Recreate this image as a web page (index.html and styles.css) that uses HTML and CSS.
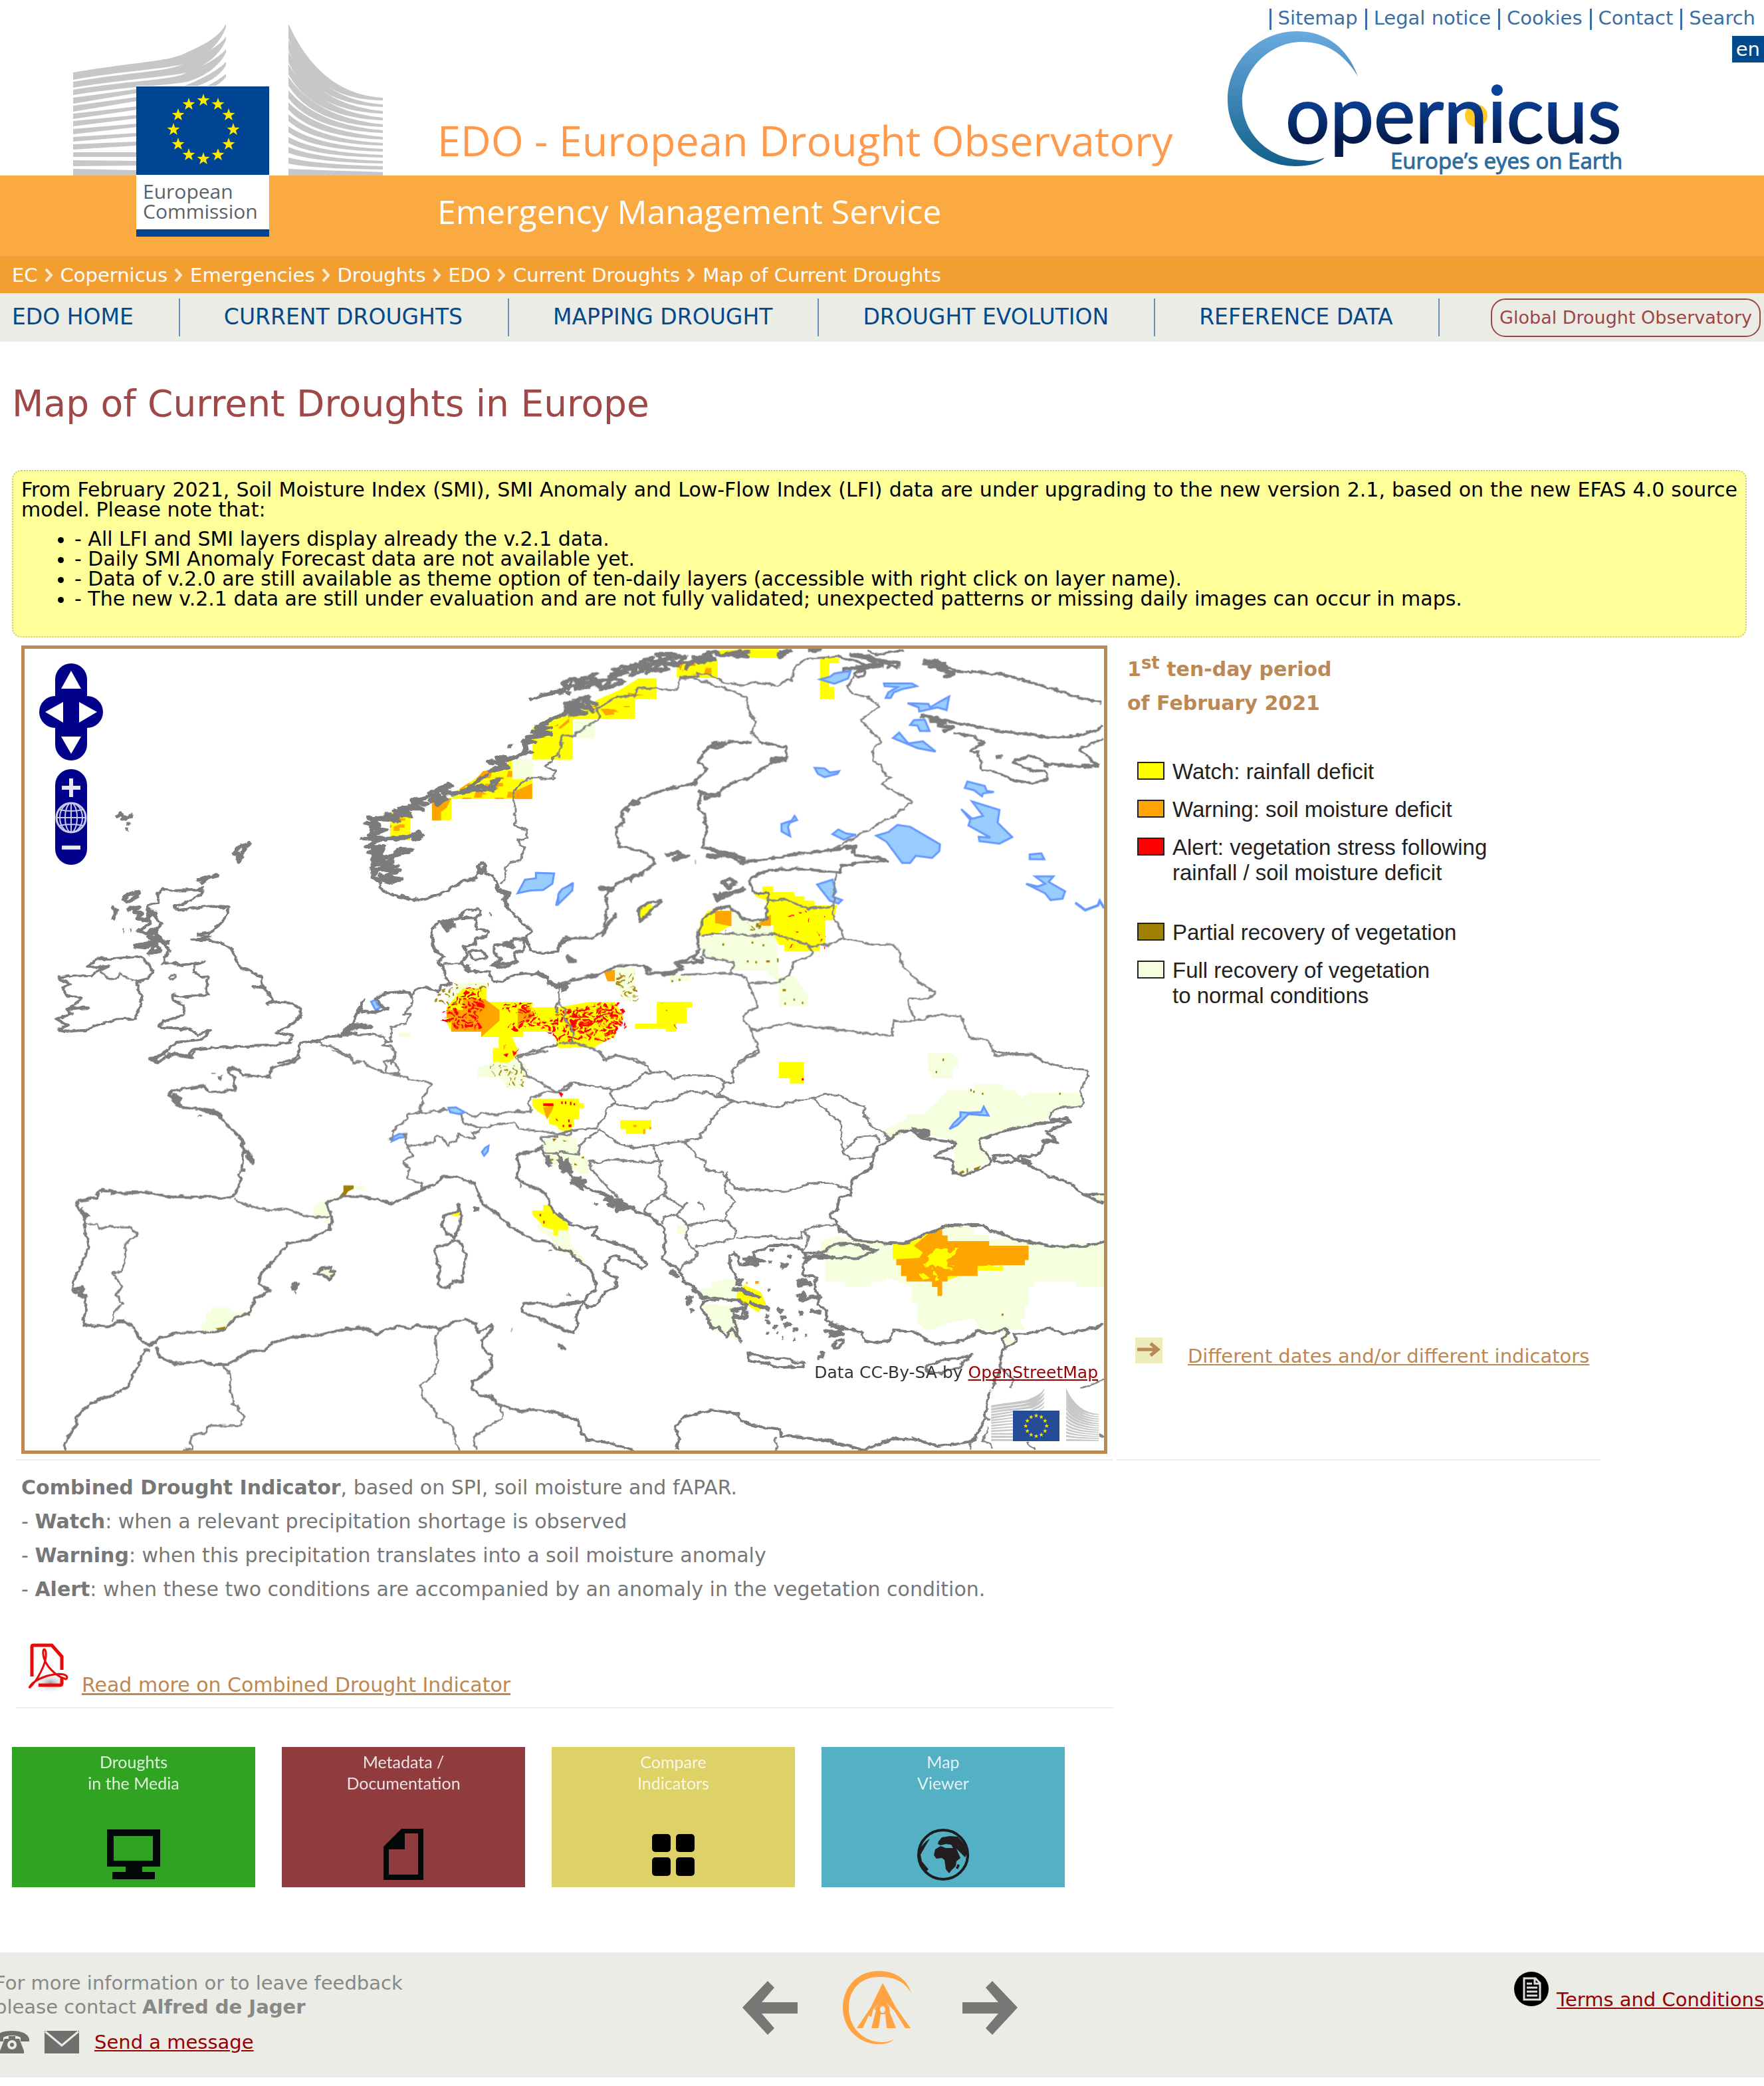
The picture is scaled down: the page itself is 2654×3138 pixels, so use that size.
FILE: index.html
```html
<!DOCTYPE html>
<html lang="en">
<head>
<meta charset="utf-8">
<title>Map of Current Droughts in Europe - EDO</title>
<meta name="viewport" content="width=device-width, initial-scale=1">
<link rel="stylesheet" href="styles.css">
</head>
<body>
<svg class="defs" width="0" height="0" aria-hidden="true">
  <defs>
    <filter id="rough" x="-2%" y="-2%" width="104%" height="104%">
      <feTurbulence type="fractalNoise" baseFrequency=".045" numOctaves="3" seed="4"/>
      <feDisplacementMap in="SourceGraphic" scale="16" xChannelSelector="R" yChannelSelector="G"/>
    </filter>
    <filter id="scatter" x="-5%" y="-5%" width="110%" height="110%">
      <feTurbulence type="fractalNoise" baseFrequency=".035" numOctaves="2" seed="9"/>
      <feDisplacementMap in="SourceGraphic" scale="45" xChannelSelector="R" yChannelSelector="G"/>
    </filter>
    <polygon id="star" points="0,-10 2.3,-3.2 9.5,-3.1 3.8,1.2 5.9,8.1 0,4 -5.9,8.1 -3.8,1.2 -9.5,-3.1 -2.3,-3.2"/>
    <g id="stars" fill="#fde800">
      <use href="#star" x="0" y="-44"/><use href="#star" x="22" y="-38"/><use href="#star" x="38" y="-22"/>
      <use href="#star" x="45" y="0"/><use href="#star" x="38" y="22"/><use href="#star" x="22" y="38"/>
      <use href="#star" x="0" y="44"/><use href="#star" x="-22" y="38"/><use href="#star" x="-38" y="22"/>
      <use href="#star" x="-45" y="0"/><use href="#star" x="-38" y="-22"/><use href="#star" x="-22" y="-38"/>
    </g>
    <g id="building" fill="#c6c7c9">
      <path d="M110 109C190 95 245 93 272 83C305 68 328 58 340 36V41C330 68 308 86 282 95C250 104 190 106 110 120Z"/>
      <path d="M110 123C190 109 245 108 272 98C305 83 330 70 340 55V60C330 84 308 100 282 109C250 116 190 119 110 132Z"/>
      <path d="M110 135C190 122 245 121 272 113C305 100 328 88 340 74V79C330 100 308 115 282 123C250 129 190 130 110 143Z"/>
      <path d="M278 129C308 117 330 104 340 93V98C330 116 310 126 290 131Z"/>
      <path d="M310 130C322 124 332 118 340 111V116C332 125 325 129 320 131Z"/>
      <path d="M110 147L206 134V140L110 156Z"/><path d="M110 159L206 146V152L110 168Z"/>
      <path d="M110 171L206 160V165L110 179Z"/><path d="M110 182L206 173V178L110 190Z"/>
      <path d="M110 194L206 186V191L110 202Z"/><path d="M110 206L206 200V205L110 213Z"/>
      <path d="M110 217L206 213V219L110 225Z"/><path d="M110 229H206V236H110Z"/>
      <path d="M110 241L206 242V249L110 250Z"/><path d="M110 254L206 256V264H110Z"/>
      <path d="M434 36Q482 142 576 147V151Q470 150 434 58Z"/>
      <path d="M434 60Q480 151 576 157V161Q470 158 434 76Z"/>
      <path d="M434 78Q478 159 576 167V171Q470 168 434 94Z"/>
      <path d="M434 97Q478 168 576 177V181Q470 177 434 112Z"/>
      <path d="M434 116Q478 178 576 187V191Q470 187 434 129Z"/>
      <path d="M434 136Q478 188 576 196V200Q470 196 434 148Z"/>
      <path d="M434 154Q478 198 576 206V210Q470 206 434 165Z"/>
      <path d="M434 172Q478 210 576 215V219Q470 216 434 182Z"/>
      <path d="M434 190Q478 220 576 224V228Q470 226 434 199Z"/>
      <path d="M434 206Q478 230 576 233V237Q470 235 434 215Z"/>
      <path d="M434 221Q478 239 576 242V246Q470 244 434 230Z"/>
      <path d="M434 237Q478 248 576 250V255Q470 254 434 246Z"/>
      <path d="M434 254Q478 256 576 259V264H434Z"/>
    </g>
    <linearGradient id="swoosh" x1="0" y1="0" x2="0" y2="1"><stop offset="0" stop-color="#6aaade"/><stop offset="1" stop-color="#11608b"/></linearGradient>
    <linearGradient id="letters" x1="0" y1="0" x2="0" y2="1"><stop offset=".35" stop-color="#0b429a"/><stop offset=".8" stop-color="#041a4a"/></linearGradient>
    <radialGradient id="shade"><stop offset="0" stop-color="#999"/><stop offset="1" stop-color="#fff" stop-opacity="0"/></radialGradient>
    <pattern id="red" width="72" height="80" patternUnits="userSpaceOnUse">
      <path fill="#f00" d="M0 0h15v10h-15zM22 5h7v20h-7zM36 0h14v8h-14zM58 8h14v9h-14zM8 18h7v20h-7zM29 30h20v9h-20zM50 22h7v18h-7zM64 26h8v14h-8zM0 46h14v9h-14zM22 42h7v16h-7zM36 48h8v20h-8zM50 46h15v8h-15zM8 62h20v9h-20zM57 60h8v18h-8zM43 70h7v10h-7zM0 72h7v8h-7z"/>
    </pattern>
    <pattern id="sparse" width="97" height="113" patternUnits="userSpaceOnUse">
      <path fill="#f00" d="M12 14h4v8h-4zM50 5h4v8h-4zM70 60h4v9h-4zM30 72h4v9h-4zM46 88h5v8h-5zM84 98h4v8h-4z"/>
    </pattern>
    <pattern id="flecks" width="62" height="70" patternUnits="userSpaceOnUse">
      <path fill="#a08000" d="M4 4h5v14h-5zM16 0h8v8h-8zM30 10h5v10h-5zM46 5h5v20h-5zM12 26h12v8h-12zM36 30h5v14h-5zM54 34h5v9h-5zM4 44h5v14h-5zM22 50h10v7h-10zM46 52h5v13h-5z"/>
    </pattern>
    <pattern id="mottle" width="90" height="76" patternUnits="userSpaceOnUse">
      <path fill="#ffa500" d="M0 10l18-8h12v12h-14v12h-16zM44 34h20l12 10h-14v12h-22zM70 4h14v10h-14zM8 56h24v8h-24z"/>
    </pattern>
  </defs>
</svg>

<header class="site-header">
  <svg class="ec-logo" viewBox="110 36 466 320" role="img" aria-label="European Commission">
    <use href="#building"/>
    <rect x="205" y="129" width="200" height="227" fill="#fff"/>
    <rect x="205" y="130" width="200" height="133" fill="#004494"/>
    <rect x="205" y="345" width="200" height="11" fill="#004494"/>
    <use href="#stars" x="306" y="195"/>
    <text class="ec-name" x="215" y="299">European</text>
    <text class="ec-name" x="215" y="329">Commission</text>
  </svg>
  <div class="titles">
    <p class="site-title">EDO - European Drought Observatory</p>
    <p class="site-subtitle">Emergency Management Service</p>
  </div>
  <div class="header-side">
    <nav class="tools" aria-label="Site tools">
      <a href="#">Sitemap</a><a href="#">Legal notice</a><a href="#">Cookies</a><a href="#">Contact</a><a href="#">Search</a>
    </nav>
    <div class="brand-row">
      <svg class="copernicus" viewBox="1844 46 600 220" role="img" aria-label="Copernicus, Europe's eyes on Earth">
        <path fill="url(#swoosh)" d="M2042 115C2025 68 1990 47 1950 47C1893 47 1846 92 1846 150C1846 206 1893 250 1948 250C1968 250 1984 246 1992 237C1980 242 1970 243 1960 241C1908 240 1868 200 1868 152C1868 104 1910 63 1958 63C1995 63 2022 82 2042 115Z"/>
        <circle cx="2220" cy="174" r="17" fill="#ffc928"/>
        <text class="brand-name" x="1933" y="215" fill="url(#letters)" stroke="url(#letters)">opernicus</text>
        <text class="brand-tag" x="2091" y="254">Europe’s eyes on Earth</text>
      </svg>
      <a class="lang" href="#">en</a>
    </div>
  </div>
</header>

<nav class="crumbs" aria-label="Breadcrumb">
  <a href="#">EC</a><svg viewBox="0 0 14 20"><path d="M2 1l8 9-8 9"/></svg><a href="#">Copernicus</a><svg viewBox="0 0 14 20"><path d="M2 1l8 9-8 9"/></svg><a href="#">Emergencies</a><svg viewBox="0 0 14 20"><path d="M2 1l8 9-8 9"/></svg><a href="#">Droughts</a><svg viewBox="0 0 14 20"><path d="M2 1l8 9-8 9"/></svg><a href="#">EDO</a><svg viewBox="0 0 14 20"><path d="M2 1l8 9-8 9"/></svg><a href="#">Current Droughts</a><svg viewBox="0 0 14 20"><path d="M2 1l8 9-8 9"/></svg><a href="#">Map of Current Droughts</a>
</nav>

<nav class="menu" aria-label="Main">
  <a class="item" href="#">EDO HOME</a>
  <a class="item" href="#">CURRENT DROUGHTS</a>
  <a class="item" href="#">MAPPING DROUGHT</a>
  <a class="item" href="#">DROUGHT EVOLUTION</a>
  <a class="item" href="#">REFERENCE DATA</a>
  <a class="global" href="#">Global Drought Observatory</a>
</nav>

<main>
  <h1>Map of Current Droughts in Europe</h1>

  <section class="notice">
    <p>From February 2021, Soil Moisture Index (SMI), SMI Anomaly and Low-Flow Index (LFI) data are under upgrading to the new version 2.1, based on the new EFAS 4.0 source model. Please note that:</p>
    <ul>
      <li>- All LFI and SMI layers display already the v.2.1 data.</li>
      <li>- Daily SMI Anomaly Forecast data are not available yet.</li>
      <li>- Data of v.2.0 are still available as theme option of ten-daily layers (accessible with right click on layer name).</li>
      <li>- The new v.2.1 data are still under evaluation and are not fully validated; unexpected patterns or missing daily images can occur in maps.</li>
    </ul>
  </section>

  <div class="columns">
    <section class="map-cell">
      <div class="map">
        <svg class="map-art" viewBox="37 976 1624 1206" role="img" aria-label="Drought indicator map of Europe">
          <!-- north-west sheet -->
          <g transform="translate(0 960) scale(.5485 .4082)">
            <path class="full" d="M1405 447H1460V520H1405ZM1250 1268H1335V1360H1225V1300H1250ZM1095 1453h30v18h-30z"/>
            <path class="watch" d="M1460 330L1500 300L1568 285V447H1460ZM1238 593L1250 565L1300 520L1350 480L1405 450V520H1460V593ZM1185 590H1238V672H1185ZM1070 640H1125V745H1070Z"/>
            <path fill="url(#mottle)" d="M1238 593L1250 565L1300 520L1350 480L1405 450V593ZM1070 640H1125V745H1070Z"/>
            <path class="warn" d="M1410 593V565L1460 535V593ZM1185 672V590H1238L1225 625L1210 640V672ZM1305 520L1325 490L1352 485L1345 515ZM1520 325l35-30 13 5-20 20z"/>
            <path class="watch" d="M1225 1360L1270 1290H1335V1340H1460V1360H1568V1510H1530L1520 1450H1435V1470H1405L1420 1515L1405 1568H1352V1510H1368V1470H1320V1450H1238L1225 1415Z"/>
            <path class="warn" d="M1270 1330H1330L1370 1370V1410L1320 1470V1450H1238V1400H1225V1370H1270ZM1420 1365L1455 1360L1460 1400L1420 1430Z"/>
            <g class="speckle">
              <path fill="url(#red)" d="M1225 1370L1275 1290H1320L1330 1360L1310 1400L1330 1440H1260L1225 1415ZM1375 1345H1455L1470 1400H1568V1500H1530L1500 1450L1435 1430L1410 1465L1390 1430L1440 1390L1380 1370ZM1385 1510h30v40h-30z"/>
              <path fill="url(#flecks)" d="M1195 1300L1255 1268L1265 1300L1240 1370L1195 1340ZM1300 1270H1335V1310H1310Z"/>
            </g>
            <g class="lake">
              <path d="M1420 940L1440 890L1470 885L1470 865L1520 867L1515 905L1490 928L1455 930ZM1525 985L1535 935L1568 905V925ZM1018 1340L1030 1332L1035 1350L1045 1360L1030 1370Z"/>
            </g>
            <g class="coast">
              <path d="M445 925L475 930L555 928L560 920L548 945L510 975L480 990L490 1002L575 988L625 992L625 1010L610 1045L580 1085L545 1092L575 1100L525 1112L575 1112L605 1122L635 1150L660 1215L700 1232L718 1255L722 1280L695 1285L725 1288L748 1335L735 1350L755 1342L800 1345L825 1365L822 1400L790 1430L757 1452L805 1465L795 1488L740 1502L650 1505L580 1510L530 1515L520 1540L480 1530L455 1545L430 1565L415 1552L450 1530L480 1490L555 1478L578 1445L545 1460L515 1440L460 1435L437 1435L445 1415L500 1390L505 1350L475 1335L475 1315L495 1322L570 1315L562 1295L572 1250L555 1252L532 1225L535 1205L560 1192L500 1205L478 1198L445 1200L465 1150L440 1110L425 1090L440 1050L415 1010L405 985L435 975L432 940Z"/>
              <path d="M160 1250L215 1243L250 1245L270 1225L300 1210L240 1212L265 1182L320 1180L390 1172L400 1195L420 1225L405 1255L375 1265L390 1335L375 1390L370 1402L320 1405L270 1425L235 1445L180 1450L160 1440L185 1425L150 1405L200 1385L185 1370L240 1362L195 1360L225 1325L185 1320L170 1290L190 1275Z"/>
              <path class="thick" d="M335 970L350 945L380 935L372 958L340 975M310 1040L318 1010L308 990L322 1010M640 800L650 775L665 765L685 757L668 780L655 825L650 790M540 890L575 878L560 895L550 905M580 880L597 872M350 1000L380 990L365 1012L390 1015L375 1030L400 1040L425 1010L405 1000L410 1050L380 1080L400 1090L430 1070L410 1100L440 1110L370 1135L395 1140L430 1120L410 1160L440 1150L425 1115L465 1120M340 1080h3M358 1075h3M315 660L330 645L345 665L335 668L365 650M348 683h8M343 705h8"/>
              <path class="thin" d="M272 1230L300 1255L320 1258L330 1235L360 1262L375 1265M470 1240l12 0 0 12-16 3z"/>
              <path d="M760 1568L800 1555L817 1530L825 1490L870 1485L905 1468L940 1465L960 1440L985 1365L1000 1330L990 1345L988 1375L1025 1380L1065 1365L1040 1350L1030 1325L1060 1308L1110 1302L1132 1320L1135 1298L1165 1285L1205 1305L1210 1280L1238 1275L1220 1240L1215 1205L1200 1195L1218 1175L1188 1145L1186 1075L1205 1045L1255 1032L1285 1000L1312 995L1320 1015L1305 1030L1262 1032M1305 1035L1308 1075L1342 1080L1335 1100L1308 1105L1305 1130L1270 1135L1280 1165L1265 1195L1285 1225L1345 1232L1350 1265L1375 1268L1410 1240L1445 1235L1490 1240L1520 1280L1555 1275L1568 1270M1355 1130L1400 1130L1405 1110L1440 1108L1435 1150L1410 1160L1420 1190L1385 1215L1350 1205L1375 1180L1355 1160ZM1285 1155L1315 1150L1335 1170L1330 1185L1300 1185Z"/>
              <path class="thick" d="M1205 1050L1240 1045L1225 1075L1210 1055L1250 1060M1375 1130l20-5 15 20M1355 1200l30 0 35-10M1285 1200l-5 25 10-15M1470 1225l15 20 20 5M1505 1270l20 15 30 0-15 15M945 1450l20-25 50 5-60 10-15 20 40-5M1345 1020h4"/>
              <path class="thin" d="M1215 1200H1265M1135 1298L1130 1350L1108 1385L1125 1385L1115 1420L1075 1432L1070 1460L1075 1490L1055 1485L1050 1500L1070 1505L1085 1530L1075 1568M940 1465L1020 1458L1050 1470L1062 1485M870 1485L885 1500L920 1510L935 1530L960 1545L970 1560M1530 1285L1535 1330L1525 1370L1550 1410L1550 1440L1568 1470M1568 1495L1530 1495L1415 1540L1425 1568"/>
              <path d="M1020 880L1045 900L1040 920L1070 945L1120 960L1150 965L1210 945L1270 895L1305 885L1318 830L1330 830L1332 870L1355 880L1368 930L1395 950L1385 985L1420 1030L1440 1060L1460 1075L1442 1110L1460 1155L1490 1162L1530 1155L1535 1125L1568 1108"/>
              <path class="thick" d="M1368 930l30 10-15 20 5 25M1310 835l10 30 12-30M1100 950l25 12M1455 230L1480 210L1540 195L1568 205M1545 165L1560 185L1568 160M1568 235L1550 280L1520 295L1495 310L1470 330L1510 330L1465 345L1515 352L1445 365L1465 385L1435 380L1445 410L1430 430L1460 420L1410 440L1390 450L1340 455L1380 465L1345 490L1395 475L1365 440L1400 445M1390 398h14M1340 500L1310 525L1290 550L1260 570L1320 545L1350 560L1370 520L1350 530L1340 560L1280 565L1240 575L1200 555L1230 540L1215 570L1240 545L1175 570L1210 590L1180 600L1225 590L1200 615L1190 580L1130 600L1170 610L1120 615L1160 630L1105 630L1130 655L1080 635L1120 650L1060 650L1090 660L1030 660L1090 675L1010 665L1040 690L1005 685L1045 710L1025 700L1060 705L1010 725L1060 740L1110 735L1150 715L1135 745L1160 725L1080 740L995 740L1040 745L1005 770L1050 770L1010 790L1045 800L1050 765L1020 815L1085 800L1130 780L1090 780L1080 805L1060 825L1025 830L1090 840L1050 850L1020 850L1095 858L1060 875L1100 890L1070 895L1040 870L1075 900L1020 880L1035 845M1020 820l60 5M1020 690l5 185M1040 780l10 80M1500 310l-30 45 20-20M1195 560l20 40 10-45M1090 630l60-15M1350 455l40 20"/>
              <path class="thin" d="M1568 360H1545L1540 410L1500 470L1525 490L1518 515L1450 515L1410 560L1412 690L1448 710L1445 740L1420 745L1438 780L1425 820L1400 825L1385 850L1388 890L1372 905"/>
            </g>
          </g>
          <!-- north-east sheet -->
          <g transform="translate(840 960) scale(.5485 .4082)">
            <path class="full" d="M40 298H100V370H40ZM475 1000L505 1035L570 1040L600 1090V1130L605 1245H575V1225H480L470 1190L400 1175L385 1110L475 1085ZM590 1245H645L685 1310V1358H605V1280ZM155 1215H210V1335H175L155 1260ZM305 1240h55v25h-55zM1015 1530H1083L1097 1568H1015Z"/>
            <path class="watch" d="M0 290L40 280L110 225L170 190L220 148H270V225H210V298H40V447H0ZM325 145V90L380 80H437V147ZM440 45L520 40H605V73H530L500 55L440 70ZM718 73H770V92H743V180H757V225H718ZM217 1005L245 975L262 990L240 1025L225 1045ZM535 940L560 935V915H590V935H648V952H675V967H702V985H765L755 1040H733V1130H717V1153H620V1130H605L590 1090V1060L570 1050V965L545 955ZM385 1095L390 1040L410 1005H470V1060L435 1090ZM270 1340H367V1360H352V1420H323V1450H295V1440H210V1420H270ZM0 1360L85 1340H155L180 1400L160 1440L155 1470L120 1490L100 1508L0 1508ZM605 1562h70v6h-70z"/>
            <path class="warn" d="M430 1005H475V1062L430 1050ZM550 1050L583 1018V1060H560ZM125 1230L155 1222V1265H135ZM115 260l25 0 15 20-25 5zM190 200l45 10-40 5zM325 90l20-10-10 40zM0 330l30-35 0 15-25 25z"/>
            <path fill="url(#mottle)" d="M340 90H420V140L340 130ZM70 250H210V280H70Z"/>
            <g class="speckle">
              <path fill="url(#red)" d="M5 1360H70L100 1342L165 1345L180 1400L200 1420V1440L155 1435V1470L100 1480L70 1470L30 1490L0 1470Z"/>
              <path fill="url(#red)" transform="translate(34 28)" d="M0 1335H130V1400H40L0 1430Z"/>
              <path fill="url(#sparse)" d="M600 1000H740V1145H620ZM395 1040H460V1090H395ZM280 1345H340V1440H280Z"/>
              <path fill="url(#flecks)" d="M160 1240H210V1335H175ZM520 1050H552V1070H520Z"/>
            </g>
            <path class="part" d="M517 1187h5v8h-5zM540 1190h5v8h-5zM570 1187h10v8h-10zM600 1180h4v14h-4zM450 1125h5v8h-5zM560 1128h5v8h-5zM530 1118h5v8h-5zM615 1293h9v8h-9zM645 1328h4v8h-4zM668 1340h4v8h-4zM620 1343h4v8h-4zM310 1260h5v8h-5zM330 1255h5v8h-5zM1054 1548h5v10h-5z"/>
            <g class="lake">
              <path d="M718 152L745 142L757 130L802 120L795 148L757 168ZM893 167H970L983 177L945 187L920 200L912 220L898 220L905 200L930 180L895 177ZM958 240L1015 242L1020 255L1045 235L1072 215L1065 265L1040 255L990 270L988 255ZM965 320L975 302L1005 300L1018 342H992L985 322ZM918 368L935 348L960 388L1000 380L1035 418L985 405ZM703 478L730 480L745 495L770 490L765 500L730 512L712 500ZM1115 552L1122 528L1170 545L1175 563L1195 567L1165 572L1162 583L1140 560ZM1105 630L1135 665L1165 655L1135 602L1210 633L1205 680L1245 733L1210 757L1155 748L1153 732L1185 735L1125 690L1130 670ZM612 685L640 672L648 655L655 670L635 680L630 695L636 730L612 712ZM752 722L768 705L790 720L817 725L800 732L783 743ZM872 728L905 715L930 688L965 695L1047 760L1045 785L1025 810L980 802L965 828H943L900 750ZM1293 797L1325 793L1333 815L1293 814ZM1308 878H1358L1345 898L1390 933L1383 960L1350 965L1335 940L1283 905L1315 915L1335 905ZM710 908L752 890L762 935L752 952L778 965L768 978L745 968ZM0 945L10 925L40 905L38 930L0 980Z"/>
              <path class="river" d="M1418 975L1445 1002L1480 985L1485 968L1497 995"/>
            </g>
            <g class="coast">
              <path class="thick" d="M0 205L25 180L10 165L40 150L70 165L45 190L90 175L60 155L105 130L80 165L120 180L100 160L150 150L120 190L180 160L140 140L190 125L150 120L170 105L215 100L200 135L230 120L210 95L240 110L225 90L260 70L240 130L280 90L260 120L300 115L270 60L320 60L280 90L330 100L300 70L350 65L320 100L370 85L350 110L390 65L380 90L420 80L370 70L430 75L400 60L430 50L445 65L500 50L460 60L520 70L500 55L530 45M0 290L30 270L20 245L50 235L30 265L70 250L45 230L85 215L60 250L95 265L70 225L110 245M20 260L75 275L30 285L60 240M15 185L110 150M150 130L300 75M640 45L605 70L610 45M600 60l30-15M685 42H725M800 60L850 70L890 85L930 90L870 95L850 75M990 285L1040 295L1020 305L1060 310L1040 320L1080 330L1055 345M1000 90L1060 95L1020 105L1065 110L1040 115L1085 130L1055 145M780 115l60-10 50-5"/>
              <path d="M1000 85L1040 82L1085 120L1140 125L1215 133L1270 152L1360 190L1420 215L1490 240M1010 290L1100 315L1180 335L1260 350L1370 368L1440 355L1475 340L1497 320M1497 370L1445 400L1430 412L1475 465L1440 475L1340 462L1310 440L1290 433L1248 457L1300 490L1335 487L1345 520L1300 535L1245 522L1215 500L1165 485L1150 420L1130 415L1165 385L1140 362L1085 348M850 48L870 60L950 45M765 68L820 85L842 100L835 112L890 103L900 85L935 90L930 108L902 103M820 125L835 115L840 135L820 145L812 135Z"/>
              <path class="thick" d="M1200 437h18M1435 470h50M1330 462l20 5M1150 390l15 0M840 108l-20 15"/>
              <path class="jag" d="M530 385L465 382L440 405L410 400L385 460L410 480L370 535L290 560L205 600L175 640L180 680L160 700L165 765L240 790L265 830L220 875L190 885L140 925L130 950L135 990L120 1100L158 1015L120 1080L95 1105L20 1105L0 1125M550 385L625 400L625 450L590 455L530 510L475 535L430 575L390 575L385 625L400 650L408 710L395 770L470 795L500 828L580 812L660 795L760 778L805 770L815 800L890 812L905 822L835 825L775 840L775 862L650 850L580 855L525 880L530 930L545 940L575 940L570 1035L540 1042L510 1035L470 990L430 998L395 1040L382 1085L385 1150L350 1190L320 1195L340 1210L305 1235L245 1235L235 1210L165 1205L110 1240L30 1262L0 1280"/>
              <path class="thick" d="M420 390L460 385M385 570L440 578L400 590M205 590l0 20 20-5M180 630l15 8M400 770l60 25-50 8 80 0-60-20 70 25 10 20M295 800l30-10 30 15-40 10 20-15M375 825h2M790 775l25-10-8 30M580 440l30 5-25 3 40-5M370 535l10-5M235 865l-30 15-10 15M110 920l40 5-15 10M880 815l15 8M450 900l20-15 15 20-20 15zM430 940l0 15 80-30M445 935l-10 30 60-35M235 1210l20 15M280 1240l30-5 30-20M0 1270l15 20M25 1175l20 15-15 0zM455 385l-40 15-20 20"/>
              <path d="M217 1005L245 975L285 968L262 990L240 1025L225 1045ZM385 1150L370 1180L395 1195L395 1170M320 1195L390 1195"/>
              <path class="thin" d="M0 440L12 360L45 358L115 290L105 262L160 215L210 215L220 182L325 190L335 145L380 150L515 215L520 265L542 310L530 345L550 382M335 145L385 140L380 125L435 145L455 165L510 172L540 160L600 177L615 158L640 155L650 100L685 75L765 68M812 140L795 180L805 205L850 218L882 250L830 300L888 385L865 405L862 455L885 465L890 495L912 515L885 540L970 600L920 655L760 775M765 862L760 885L755 985L755 1030L778 1080L780 1105L745 1130L690 1135L635 1105L595 1090L540 1095L430 1088L390 1100M575 965L625 962L685 998L735 992L755 985M780 1105L850 1125L880 1130L915 1128L935 1150L940 1200L985 1265L1035 1305L1015 1330L965 1325L960 1340L980 1408L920 1412L915 1465L820 1452L720 1435L620 1420L545 1445L525 1440L545 1500L548 1525L495 1568M980 1408L1010 1405L1020 1392L1105 1390L1125 1470L1180 1480L1195 1535L1300 1535L1330 1565M690 1135L700 1165L645 1195L635 1245L600 1270L520 1270L515 1250L480 1235L340 1240M475 1235L480 1195L405 1175L395 1145M520 1270L540 1330L543 1360L505 1395L525 1440M0 1340L20 1370L15 1395L40 1440L40 1490L110 1520L130 1555L155 1540L200 1550L240 1568M0 1495L40 1490"/>
            </g>
          </g>
          <!-- south-west sheet -->
          <g transform="translate(0 1580) scale(.5485 .4082)">
            <path class="full" d="M860 570L895 550L935 530L975 500H1000V515H950L900 560V610L905 635H890V612H860ZM565 965H578V948H635V965H685L655 980L615 1030L580 1040H553V1005H563ZM1310 65L1350 45L1430 30L1445 70L1430 140L1395 140L1370 100H1310ZM1485 330L1568 315V385L1500 385ZM1500 385H1568L1520 425L1505 430ZM1475 640L1560 660L1568 745L1530 740L1510 690L1475 660ZM870 825L900 800L920 815L900 845Z"/>
            <path class="watch" d="M1352 0H1405L1420 15L1395 45L1370 45L1352 25ZM1460 178H1568V300L1555 305L1540 285L1505 270V250L1475 225L1460 205ZM1490 570H1508L1525 600L1558 640V662H1530V682H1518V660L1490 650L1475 625L1460 605V590H1490ZM1238 598L1258 590L1262 610H1240Z"/>
            <path class="warn" d="M1490 210l30-10-5 20-15 35z"/>
            <path class="part" d="M942 498H970V510L955 520L945 540H930L942 520ZM590 1025l30-8-10 18zM680 970h6v8h-6zM885 825h6v8h-6zM900 838h8v8h-8zM905 828h6v8h-6zM1515 325l12 0-8 12zM1545 328l10 8-6 0zM1510 400h8v6h-8z"/>
            <path class="speckle" fill="url(#flecks)" d="M1350 55H1445V140H1390V90H1350Z"/>
            <path fill="#f00" d="M1380 15l15-5-5 15zM1405 0l12 10-8 12zM1490 195h28v10h-28zM1535 155l10 5-6 15zM1538 190h5v10h-5zM1550 190h5v10h-5zM1525 250l8 12-8-5zM1545 278h6v8h-6zM1560 275h6v8h-6zM1490 628h4v10h-4zM1480 603h4v8h-4z"/>
            <path class="lake" d="M1230 212L1250 210L1275 228L1260 235L1235 228ZM1075 335L1080 318L1095 308L1115 310L1112 320L1095 322ZM1330 360L1340 352L1338 372L1328 388L1322 375Z"/>
            <g class="coast">
              <path class="jag" d="M460 0L445 15L412 35L440 40L465 12L525 25L535 0M820 0L820 25L800 45L742 65L740 92L715 97L665 92L655 68L625 70L640 95L645 148L578 155L555 132L470 150L462 165L490 185L485 205L540 215L595 235L615 265L660 325L668 385L655 500L640 540L605 548L575 540L470 540L400 522L340 528L295 515L270 520L265 545L215 555L210 572L235 620L232 650L243 730L205 840L198 885L235 905L235 965L228 1012L290 1017L345 998L375 1040L385 1070L415 1088L435 1060L485 1040L575 1038L615 1030L645 985L683 970L700 915L740 885L712 860L712 830L775 740L785 712L850 695L905 660L910 615L898 560L940 538L1005 540L1070 562L1105 550L1160 510L1190 500L1215 463L1255 468L1300 490L1325 570L1350 590L1400 650L1465 698L1505 705L1530 735L1568 745"/>
              <path class="thick" d="M470 165l25 10-15 10 10 15-15-20M545 215l45 10 20 20M548 240v4M655 320l12 15-8 20M668 375l12 0 15 40-15-30M665 440h8M600 100h10M585 83v4M222 580l10 20 8 15M205 885l20-10-5 30 20 0M300 525l20 0M320 1000l25-5M1300 585h15M800 875l15-15 0 15zM810 888h3M1255 575l5-10M1425 497h4M1510 735v4M1405 1030h2M1530 1085l14 10 0 10M1510 420l-10-30M1540 400l20 30-15 15 0-50 25 30M1560 900v4"/>
              <path d="M865 825L885 800L908 797L905 812L923 815L905 845L885 830ZM1258 570L1265 610L1262 655L1245 690L1225 675L1213 640L1218 610L1255 592ZM1245 700L1262 705L1278 750L1275 800L1268 855L1240 850L1232 875L1203 868L1205 800L1190 735L1195 725L1215 722ZM1568 640L1520 600L1495 525L1435 490L1418 470L1425 425L1415 385L1465 370L1485 355L1495 395L1510 430M1568 930L1525 942L1470 930L1435 932L1430 965L1475 985L1520 1015L1568 1040"/>
              <path class="jag" d="M425 1095L440 1130L480 1155L560 1145L580 1158L625 1158L660 1130L690 1108L725 1105L750 1080L800 1055L880 1048L950 1025L1005 1025L1035 1045L1090 1015L1125 1025L1140 1015L1210 1025L1240 1002L1275 990L1305 1005L1310 1040L1352 1015L1350 1030L1320 1070L1320 1095L1345 1125L1350 1165L1330 1195L1295 1220L1295 1245L1315 1270L1350 1275L1360 1300L1420 1330L1480 1325L1530 1335L1568 1355M415 1105H398L350 1240L320 1265L250 1298L210 1350L208 1385L182 1430L178 1472"/>
              <path class="thin" d="M605 1158L628 1185L640 1300L670 1352L660 1385L570 1382L568 1408L525 1420L520 1445L528 1470H505M1215 1025L1195 1055L1200 1150L1192 1195L1155 1235L1160 1280L1195 1330L1200 1355L1240 1385L1257 1472M1375 1305L1378 1360L1350 1375L1300 1425L1308 1472M645 545L665 565L730 590L775 582L820 600L865 618L905 612M235 640L268 638L272 660L300 650L360 650L378 680L345 712L345 770L335 815L308 820L335 870L320 905L337 935L312 965L308 1000M910 0L960 20L970 48L998 38L1005 55L1055 82L1095 88L1130 108L1185 122L1160 175L1153 228L1122 235L1115 255L1075 300L1070 332M1085 0L1075 35L1055 45L1060 80M1075 40L1095 70L1088 85M1153 228L1205 225L1215 215L1230 222M1275 228L1305 245L1320 230L1360 240L1420 222L1460 230L1448 195L1458 175L1500 150L1530 155L1568 120M1265 235L1270 265L1320 285L1380 270L1410 268L1425 290L1485 298L1555 315L1568 300M1320 285L1315 300L1295 305L1300 325L1255 310L1250 335L1235 340L1233 355L1215 325L1200 315L1185 340L1155 350L1115 350L1110 305M1115 350L1130 390L1105 410L1122 440L1118 475L1160 490L1155 510M1550 315L1485 318L1492 350M1492 380H1568M1530 155L1490 125L1440 85L1420 25L1500 0"/>
            </g>
          </g>
          <!-- south-east sheet -->
          <g transform="translate(840 1580) scale(.5485 .4082)">
            <path class="full" d="M1015 12H1083V25H1097V60H1083V102H1025V80H1015ZM885 300L930 270L955 255V237H1000L1040 190L1070 145H1140V125H1220V145H1250L1270 175L1295 155H1435V205H1380L1345 255L1220 295L1155 330L1175 385L1190 410L1150 430L1085 460L1087 350L1095 335L965 295L910 330ZM0 310L50 325L60 385L85 400V455H60L30 430L0 420ZM720 705L760 685L830 710H915L960 700L1060 650H1140V680H1182V700L1250 690L1330 720L1497 705V872H1420V852H1305V872H1290V940H1280V990H1265L1280 1030L1220 1025L1240 1050L1250 1080L1225 1100L1215 1035L1160 1030L1140 990L1083 1000L1050 1015L1015 1035L985 1005V930H970V872L900 835V850L855 855V870H787V852H733V785L720 740ZM385 880L420 875V855L480 840L500 870L490 915H440L395 910ZM390 930L490 945L500 1075L460 1050L420 1030L410 980ZM1450 530L1497 530V565L1460 545ZM325 645h25v30h-25zM0 665H25V700L70 765V790L40 760L0 735Z"/>
            <path class="watch" d="M605 45H673V123H635V103H605ZM170 257H255V290H240V308H185V290H170ZM0 178H57V195H70V215H57V255H42V280L25 290V305L0 290ZM0 615L27 645V662H0ZM490 895L510 865L555 890L570 935L548 965L515 935L490 920ZM917 710H960L1025 665L1060 700L1200 800H1220V812L1150 810L1060 850L960 770H917Z"/>
            <path class="warn" d="M1025 665L1053 657V682H1068V703H1182V720H1290V773H1280V792H1220L1150 795V832H1068V852H1053V905H1040V872H1025V852H955V832H940V792H927V770L990 765L1000 745L975 720ZM206 275h8v8h-8zM233 290h5v18h-5zM250 283h5v8h-5zM540 850h10v10h-10zM515 853h4v8h-4z"/>
            <path class="watch speckle" d="M1005 750l30-10 35 0 30-5-15 20-15 10-5 30 15 15-35-5-10-20-25-5 10-15zM990 830l15-10 5 20-15 5zM1030 820l15 15-15 10zM1180 792H1220V810H1155ZM1010 780h5v8h-5zM1020 800h5v8h-5zM1080 780h5v8h-5z"/>
            <path class="part" d="M1130 143h4v8h-4zM1138 149h4v8h-4zM1162 156h4v8h-4zM1374 156h4v8h-4zM1054 30h4v10h-4zM1035 76h4v8h-4zM1100 450l10-8 5 8-15 8zM1120 435h4v15h-4zM1140 435l20-10-8 14-12 4zM45 415l8 8-10 0zM62 395l8-5 0 10zM12 330l12 5-8 2zM1216 970h5v8h-5z"/>
            <path fill="#f00" d="M0 155h10l-4 12zM8 188h4v10h-4zM18 188h4v10h-4zM32 190h4v12h-4zM42 195h4v8h-4zM27 255h4v10h-4zM12 275h4v8h-4zM28 273h8v10h-8zM668 103h5v8h-5z"/>
            <path class="lake" d="M1073 290L1085 268L1103 245V228L1125 230L1160 228L1167 208L1180 240L1155 238L1125 235L1095 275Z"/>
            <g class="coast">
              <path class="jag" d="M0 600L35 645L65 653L105 650L95 685L145 705L205 735L240 785L230 805L205 785L170 770L158 755L140 765L125 812L160 840L158 870L130 890L100 945L82 948L70 925L80 900L105 880L95 825L75 790L50 775L35 745L0 730M0 940L70 925L48 985L55 1015L42 1040L20 1035L0 1015"/>
              <path class="jag" d="M0 380L30 455L80 510L150 545L210 590L260 620L285 650L295 680L288 770L330 810L345 850L370 875L395 910L440 915L490 920L515 940L500 985L480 970L485 1010L497 1065L475 1025L460 1055L440 1015L425 1030L410 985L390 950L400 925L440 920M490 840L470 790L470 755L485 745L500 790L545 790L535 745L560 735L575 718L640 718L668 735L680 748L725 745L760 715L800 712L835 725L850 735L875 735L825 765L760 768L735 755L700 760L672 785L670 830L710 835L700 880L720 910L710 935L735 960L735 995L785 1025L830 1040L840 1070L865 1078L910 1068L920 1030L970 1035L1035 1085L1110 1070L1150 1035L1190 1045L1225 1025L1235 1040L1215 1065L1228 1095L1215 1110L1215 1170L1180 1270L1165 1380L1130 1445L1040 1460L1000 1440L930 1430L890 1445L840 1472L740 1440L665 1425L610 1420L605 1395L540 1385L500 1365L495 1340L420 1325L350 1350L320 1385L330 1440L325 1472M0 1340L55 1365L60 1400L80 1435L150 1450L205 1472"/>
              <path d="M1228 1095L1255 1070L1250 1045L1285 1045L1350 1025L1390 1045L1450 1030L1497 1010M765 640L775 665L820 700L900 710L950 712L985 690L1050 655L1075 642L1165 645L1185 665L1215 670L1235 690L1280 705L1360 722L1450 720L1497 705M765 640L745 605L765 585L770 545L800 535L808 475L860 430L865 385L875 355L910 330L935 300L970 295L1000 325L1095 340L1085 355L1055 370L1030 390L1080 405L1085 450L1110 462L1180 425L1190 405L1160 360L1155 330L1215 300L1310 270L1375 262L1405 265L1395 250L1350 255M1405 265L1340 300L1370 340L1335 340L1310 390L1265 390L1240 415L1200 410L1195 390L1240 385L1260 405L1300 430L1350 465L1390 480L1440 530L1497 565M1440 530L1497 530M525 1140L520 1115L530 1120L595 1138L630 1135L640 1150L675 1150L670 1165L600 1170L580 1155L525 1145ZM1010 1165L1060 1140L1100 1135L1135 1120L1100 1165L1050 1190L1015 1185ZM765 1070l15-5 0 15-20 20-5-10z"/>
              <path class="thick" d="M0 400L15 430L25 405L5 430L35 445L20 400M35 480L60 470L40 490L75 480L50 500L70 510M100 565l5 5M120 530L145 540L125 550L165 555L140 570L190 570L150 555L200 580L160 590L175 550M170 580l40 0M235 600l20 10M305 815l20 15-15-20M365 870l15 10M350 910l15 15-10 10 10-30M365 950l5 15M365 880l15 15M475 880L505 885L530 900L555 915M485 850l20-5-5 20-15-5M505 770L530 765L515 785L545 790L530 770L565 775L540 780M580 740l10-5 0 10M615 800l10-10-15 0M630 755l10 5M575 780h10M575 880l5 5M655 855l20-10 15 15-30 5 25-15M655 905l20-10-10 25 30-10 20 0-50 10M660 970l15 0M690 960l30 5M565 980l15 5M600 950l15 15M570 1000l10 5M610 985l15 0M620 1020l15-10-20 0M645 1030l10-5M570 1040l8 2M600 1040l3 2M590 1015l10 5M680 1050h4M645 1065h4M615 1060h4M740 1010L785 1025L760 1040L735 1035L780 1045L740 1050M710 1135l15-5 0-25M970 290L1015 300L985 310L1020 315M680 745l-5 20 60-10M700 760l60 5M1270 400l30 20M970 1430l40 15M1325 335l40 0M485 985l30 0 0-30M500 1070v10M820 715l30 15M470 960l40-10M520 930l60 25M900 320l15 10M10 1095l4 8M30 900h3"/>
              <path class="thin" d="M110 0L125 35L155 15L215 40L250 65L258 82L240 85L195 130L150 142L145 165L155 195L130 215L128 250L110 270L105 285L40 295L0 310M550 0L500 35L475 80L478 118L455 120L440 160L485 190L520 192L600 212L625 195L690 178L735 162L770 165L820 200L838 205L840 240L860 280L885 300L910 330M258 82L290 80L320 105L360 92L430 95L462 120M0 150L25 145L42 120L75 128L150 142M155 195L210 215L250 212L255 195L320 180L350 152L400 155L430 165L485 190L445 210L385 325L340 335L255 350L210 360L160 340L110 290M700 178L775 270L780 375L800 400L870 390M780 375L825 320L870 315L880 340M340 335L370 370L380 390L400 405L405 440L450 450L485 510L560 515L630 520L690 490L740 488L805 515M465 450L455 510L485 560L460 600L460 625L400 632L355 645L350 690L365 725L380 745L375 770L345 785L335 815M260 350L272 400L280 425L275 465L295 490L290 530L240 570L240 600M85 405L110 415L150 402L250 412L285 405M85 405L90 440L165 545M290 535L345 580L355 560M385 560L405 590M345 580L325 605L290 612L285 640M325 605L345 630L355 650M460 625L488 665L480 695L420 712L375 725M488 692L570 685L620 695L670 690L665 670L715 645L770 645M670 665L690 690L675 735M110 290L85 320L60 350L55 385L0 375M1185 0L1240 15L1300 12L1335 45L1410 68L1450 75L1455 95L1430 150L1440 190L1430 207L1380 210L1350 230L1350 255M600 1425L595 1440L600 1472M1165 1355L1190 1360M1130 1445V1472M1180 1390L1165 1440L1185 1450L1190 1472M1215 1170L1250 1215L1240 1245M1497 1210L1430 1248M1285 1440L1308 1472M1480 1415L1497 1425"/>
            </g>
          </g>
          <rect x="1490" y="2089" width="164" height="80" fill="#fff" fill-opacity=".85"/>
          <use href="#building" transform="translate(1453 2076) scale(.348)"/>
          <rect x="1524" y="2122" width="70" height="46" fill="#264c97"/>
          <use href="#stars" transform="translate(1559 2145) scale(.35)"/>
        </svg>
        <div class="map-controls">
          <svg class="pan" viewBox="0 0 98 146" role="img" aria-label="Pan">
            <path fill="#00008b" d="M25 24a24 24 0 0 1 48 0V49a24 24 0 0 1 0 48v25a24 24 0 0 1-48 0V97a24 24 0 0 1 0-48Z"/>
            <path fill="#fff" d="M49 11L64 38H34ZM49 136L64 110H34ZM10 73L37 58V89ZM88 73L61 58V89Z"/>
          </svg>
          <svg class="zoom" viewBox="0 0 98 146" role="img" aria-label="Zoom">
            <rect x="25" y="1" width="48" height="144" rx="24" fill="#00008b"/>
            <path fill="none" stroke="#e8e8f4" stroke-width="6" d="M35 29H63M49 15V43M35 119H63"/>
            <g fill="none" stroke="#c8c8e8" stroke-width="2"><circle cx="49" cy="74" r="22" stroke-width="3"/><ellipse cx="49" cy="74" rx="9" ry="22"/><ellipse cx="49" cy="74" rx="17" ry="22"/><path d="M27 74H71M31 62Q49 66 67 62M31 86Q49 82 67 86M49 52V96"/></g>
          </svg>
        </div>
        <p class="attribution">Data CC-By-SA by <a href="#">OpenStreetMap</a></p>
      </div>
    </section>

    <aside class="side">
      <p class="period">1<sup>st</sup> ten-day period<br>of February 2021</p>
      <ul class="legend">
        <li><svg viewBox="0 0 41 27"><rect class="watch" x="1" y="1" width="39" height="25"/></svg><span>Watch: rainfall deficit</span></li>
        <li><svg viewBox="0 0 41 27"><rect class="warn" x="1" y="1" width="39" height="25"/></svg><span>Warning: soil moisture deficit</span></li>
        <li class="gap"><svg viewBox="0 0 41 27"><rect class="alert" x="1" y="1" width="39" height="25"/></svg><span>Alert: vegetation stress following<br>rainfall / soil moisture deficit</span></li>
        <li><svg viewBox="0 0 41 27"><rect class="part" x="1" y="1" width="39" height="25"/></svg><span>Partial recovery of vegetation</span></li>
        <li><svg viewBox="0 0 41 27"><rect class="full" x="1" y="1" width="39" height="25"/></svg><span>Full recovery of vegetation<br>to normal conditions</span></li>
      </ul>
      <p class="more">
        <svg viewBox="0 0 41 39" aria-hidden="true"><rect width="41" height="39" fill="#eeecbb"/><path d="M3 18H33M23 9L34 18L23 27" fill="none" stroke="#b98955" stroke-width="5"/></svg>
        <a href="#">Different dates and/or different indicators</a>
      </p>
    </aside>
  </div>

  <section class="about">
    <p><b>Combined Drought Indicator</b>, based on SPI, soil moisture and fAPAR.</p>
    <p>- <b>Watch</b>: when a relevant precipitation shortage is observed</p>
    <p>- <b>Warning</b>: when this precipitation translates into a soil moisture anomaly</p>
    <p>- <b>Alert</b>: when these two conditions are accompanied by an anomaly in the vegetation condition.</p>
    <p class="pdf">
      <svg viewBox="0 0 64 76" aria-hidden="true">
        <ellipse cx="34" cy="60" rx="26" ry="16" fill="url(#shade)"/>
        <path d="M6 50V5Q6 3 8 3H36L51 20V40M51 52V60Q51 63 48 63H16" fill="none" stroke="#e80a0a" stroke-width="5"/>
        <path d="M2 67C13 58 29 30 27 14C26 6 22 8 23 17C25 34 43 50 57 54C63 50 55 42 29 49C11 55 4 62 2 67Z" fill="none" stroke="#e80a0a" stroke-width="3"/>
      </svg>
      <a href="#">Read more on Combined Drought Indicator</a>
    </p>
  </section>

  <nav class="tiles" aria-label="Shortcuts">
    <a class="tile green" href="#"><span>Droughts<br>in the Media</span>
      <svg viewBox="0 0 80 80"><path fill="#020808" fill-rule="evenodd" d="M0 2H80V58H53V66H72V77H8V66H28V58H0ZM10 12V49H69V12Z"/></svg></a>
    <a class="tile maroon" href="#"><span>Metadata /<br>Documentation</span>
      <svg viewBox="0 0 80 80"><path fill="#020808" fill-rule="evenodd" d="M37 1H70V78H10V28ZM42 8V32H18V70H62V8Z"/></svg></a>
    <a class="tile sand" href="#"><span>Compare<br>Indicators</span>
      <svg viewBox="0 0 80 80"><g fill="#000"><rect x="8" y="9" width="28" height="27" rx="5"/><rect x="44" y="9" width="28" height="27" rx="5"/><rect x="8" y="44" width="28" height="28" rx="5"/><rect x="44" y="44" width="28" height="28" rx="5"/></g></svg></a>
    <a class="tile teal" href="#"><span>Map<br>Viewer</span>
      <svg viewBox="0 0 80 80"><circle cx="40" cy="40" r="37" fill="none" stroke="#1c1c1e" stroke-width="4"/><path fill="#221e20" d="M33 20L38 14L50 12L62 13L72 24L76 38L73 44L66 37L60 31L66 45L60 50L59 57L52 64L49 68L44 62L42 48L38 45L30 46L26 41L28 32L36 27L44 30L55 30L52 25L44 24L36 26L32 24ZM62 54l3 2-3 6-3-2zM5 30L14 20L20 16L14 26L6 40L8 50L18 62L14 66L5 52Z"/></svg></a>
  </nav>
</main>

<footer class="site-footer">
  <div class="contact">
    <p>For more information or to leave feedback<br>please contact <b>Alfred de Jager</b></p>
    <p class="message">
      <svg viewBox="0 0 52 34" aria-hidden="true"><path fill="#6e706e" fill-rule="evenodd" d="M0 12Q4 0 26 0T52 12V16H39V10Q34 7 26 7T13 10V16H0ZM15 12H21V8H31V12H37L44 30V34H8V30ZM26 14a7 7 0 1 0 .1 0Z"/><circle cx="26" cy="21" r="3" fill="#6e706e"/></svg>
      <svg viewBox="0 0 52 34" aria-hidden="true"><path fill="#6e706e" d="M0 0H52V34H0Z"/><path d="M1 1L26 22L51 1" fill="none" stroke="#ebece6" stroke-width="3"/></svg>
      <a href="#">Send a message</a>
    </p>
  </div>
  <div class="pager">
    <a href="#" aria-label="Previous"><svg class="arrow" viewBox="0 0 83 81"><path fill="#767876" d="M0 40L38 0L48 10L29 32H83V49H29L48 71L38 81Z"/></svg></a>
    <a href="#" aria-label="EDO"><svg class="mark" viewBox="0 0 104 112"><path fill="#ffa343" d="M103 34C96 12 78 1 54 1C22 1 0 26 0 56C0 88 24 111 54 111C66 111 73 108 78 103C70 108 62 108 56 108C28 106 9 84 9 56C9 28 28 10 54 10C78 9 94 18 103 34Z"/><path fill="#ffa343" d="M60 19L80 56L102 87H94L77 60L70 55L71 64L80 87H66L64 66L60 66L57 66L54 87H43L50 60L46 58L43 70L39 68L30 87H21L42 56Z"/><path fill="#ebece6" d="M60 54a4 5 0 1 1-.1 0ZM49 56L56 49L48 56L43 66ZM71 56L65 49L73 56L78 66Z"/></svg></a>
    <a href="#" aria-label="Next"><svg class="arrow" viewBox="0 0 83 81"><path fill="#767876" d="M83 40L45 0L35 10L54 32H0V49H54L35 71L45 81Z"/></svg></a>
  </div>
  <div class="terms">
    <svg viewBox="0 0 52 52" aria-hidden="true"><circle cx="26" cy="26" r="26"/><path d="M15 10H32L39 17V42H15ZM31 10V18H39M19 18H27M19 24H35M19 30H35M19 36H35" fill="none" stroke="#ddd" stroke-width="3"/></svg>
    <a href="#">Terms and Conditions</a>
  </div>
</footer>
</body>
</html>
```
FILE: styles.css
```css
* { box-sizing: border-box; }
body {
  margin: 0;
  padding-bottom: 13px;
  background: #fff;
  color: #777;
  font-family: "DejaVu Sans", Verdana, sans-serif;
  font-size: 30px;
  overflow-x: hidden;
}
p, h1, ul { margin: 0; padding: 0; }
svg { display: block; flex: none; }
.defs { position: absolute; }
a { text-decoration: none; }

/* header */
.site-header {
  display: flex;
  align-items: flex-start;
  min-height: 384px;
  background: linear-gradient(#fff 264px, #fba941 264px);
}
.ec-logo { width: 466px; margin: 36px 82px 0 110px; }
.ec-name { font: 30px/30px "Open Sans", sans-serif; fill: #57636b; }
.titles { flex: 0 0 1187px; padding-top: 166px; font-family: "Open Sans", sans-serif; white-space: nowrap; }
.site-title { font-size: 63px; line-height: 90px; color: #ff9a4c; }
.site-subtitle { font-size: 50px; line-height: 64px; color: #fff; padding-top: 30px; }
.header-side { flex: 1; min-width: 0; }
.tools { display: flex; justify-content: flex-end; padding: 13px 2px 1px 0; font-size: 29px; line-height: 28px; }
.tools a { height: 32px; padding: 0 11px 4px 10px; border-left: 3px solid #3a6ea5; color: #3a6ea5; }
.brand-row { display: flex; justify-content: space-between; align-items: flex-start; }
.copernicus { width: 600px; }
.brand-name { font: 118px Lato, sans-serif; stroke-width: 2px; }
.brand-tag { font: 33px "Open Sans", sans-serif; fill: #2d6c9c; stroke: #2d6c9c; stroke-width: 1px; }
.lang { margin-top: 8px; padding: 0 6px; background: #034a8c; color: #fff; font-size: 29px; line-height: 40px; }

/* breadcrumb and menu */
.crumbs {
  display: flex;
  align-items: center;
  height: 57px;
  padding: 2px 0 0 18px;
  background: #f39e31;
  border-top: 1px solid #f5a94b;
  font-size: 29px;
}
.crumbs a { color: #fff; }
.crumbs svg { width: 14px; height: 20px; margin: 0 10px; fill: none; stroke: #ffe9cd; stroke-width: 4; }
.menu {
  display: flex;
  align-items: center;
  height: 73px;
  padding: 0 5px 0 18px;
  background: #ebece6;
  font-size: 33px;
}
.menu .item { height: 57px; line-height: 56px; padding-right: 68px; margin-right: 66px; border-right: 2px solid #6a8db3; color: #034a8c; white-space: nowrap; }
.menu .global { margin-left: auto; padding: 0 11px; border: 2px solid #9e4545; border-radius: 22px; color: #9e4545; font-size: 27px; line-height: 54px; white-space: nowrap; }

/* page body */
h1 { padding: 57px 18px 0; font-size: 55px; line-height: 73px; font-weight: 400; color: #a04848; }
.notice {
  margin: 63px 26px 0 18px;
  padding: 13px 12px 39px;
  background: #ffff99;
  border: 2px dotted #cccc88;
  border-radius: 14px;
  color: #000;
  line-height: 30px;
}
.notice p { text-align: justify; }
.notice ul { padding: 14px 0 2px 80px; }
.columns { display: grid; grid-template-columns: minmax(0, 1650fr) minmax(0, 728fr) minmax(0, 240fr); gap: 6px; padding: 12px 0 0 24px; }
.map-cell { padding: 0 8px 8px; border-bottom: 2px solid #efefea; }
.map { position: relative; border: 5px solid #bc8853; }
.map-art { width: 100%; }
.map-controls { position: absolute; left: 21px; top: 22px; display: grid; gap: 12px; }
.pan, .zoom { width: 98px; }
.attribution { position: absolute; right: 9px; top: 1075px; font-size: 25px; line-height: 28px; color: #333; }
.attribution a, .terms a, .message a { color: #990000; text-decoration: underline; }

/* map ink */
.coast { filter: url(#rough); }
.speckle { filter: url(#scatter); }
.coast path { fill: none; stroke: #7c7c7c; stroke-width: 4; stroke-linejoin: round; vector-effect: non-scaling-stroke; }
.coast .thin { stroke: #858585; stroke-width: 3; }
.coast .thick { stroke-width: 6; }
.lake, .lake path { fill: #99ccff; stroke: #6699ff; stroke-width: 3; vector-effect: non-scaling-stroke; }
.lake .river { fill: none; stroke-width: 4; }
.watch { fill: #ffff00; }
.warn { fill: #ffa500; }
.alert { fill: #ff0000; }
.part { fill: #a08000; }
.full { fill: #f5ffdd; }

/* legend column */
.side { display: flex; flex-direction: column; padding-left: 16px; border-bottom: 2px solid #efefea; }
.period { padding-top: 10px; font-weight: 700; line-height: 51px; color: #bc8853; }
.period sup { line-height: 0; font-size: 26px; }
.legend { padding: 59px 0 0 15px; list-style: none; font: 33px/38px "Liberation Sans", Arial, sans-serif; color: #222; }
.legend li { display: flex; align-items: flex-start; gap: 12px; padding-bottom: 19px; white-space: nowrap; }
.legend li.gap { padding-bottom: 52px; }
.legend svg { width: 41px; height: 27px; margin-top: 4px; }
.legend rect { stroke: #222; stroke-width: 2; }
.more { display: flex; align-items: flex-start; gap: 38px; margin-top: auto; padding: 0 0 127px 12px; font-size: 29px; line-height: 56px; white-space: nowrap; }
.more svg { width: 41px; height: 39px; }
.more a, .pdf a { color: #bc8853; text-decoration: underline; }

/* indicator notes */
.about { width: 1651px; max-width: 100%; margin-left: 24px; padding: 15px 0 15px 8px; border-bottom: 2px solid #efefea; line-height: 51px; }
.pdf { display: flex; align-items: flex-end; gap: 17px; padding: 56px 0 0 10px; }
.pdf svg { width: 64px; height: 76px; margin-bottom: 5px; }
.pdf a { line-height: 36px; }

.tiles { display: flex; gap: 40px; padding: 58px 18px 98px; }
.tile { display: flex; flex-direction: column; justify-content: space-between; align-items: center; width: 366px; height: 211px; padding: 6px 0 9px; text-align: center; color: #fff; font: 25px/32px Lato, sans-serif; }
.tile span { opacity: .85; }
.tile svg { width: 80px; height: 80px; }
.green { background: #30a422; }
.maroon { background: #903c3e; }
.sand { background: #ddd168; }
.teal { background: #54b1c5; }

/* footer */
.site-footer { display: grid; grid-template-columns: 1fr auto 1fr; align-items: start; background: #ebece6; min-height: 188px; color: #888; font-size: 29px; line-height: 36px; }
.contact { margin-left: -8px; padding-top: 28px; }
.message { display: flex; align-items: center; gap: 23px; padding-top: 11px; }
.message svg { width: 52px; height: 34px; }
.message a { line-height: 48px; }
.pager { display: flex; align-items: center; gap: 68px; padding: 27px 6px 0 0; }
.pager .arrow { width: 83px; height: 81px; }
.pager .mark { width: 104px; height: 112px; margin-right: 8px; }
.terms { display: flex; justify-content: flex-end; align-items: flex-start; gap: 12px; padding-top: 29px; }
.terms svg { width: 52px; height: 52px; }
.terms a { padding-top: 24px; white-space: nowrap; }
```
